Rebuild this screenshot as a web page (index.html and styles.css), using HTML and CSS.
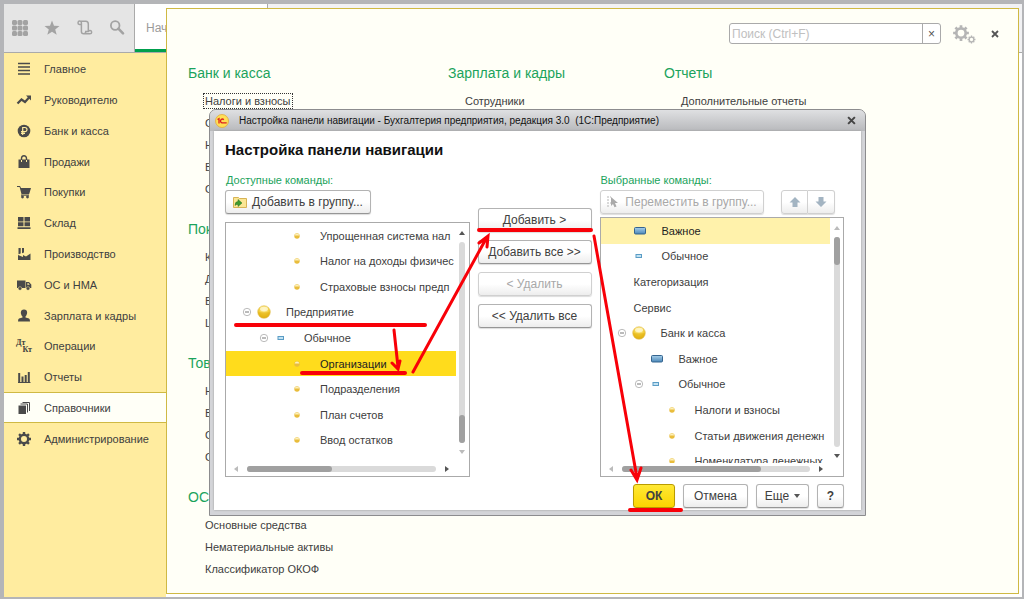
FILE: index.html
```html
<!DOCTYPE html>
<html lang="ru">
<head>
<meta charset="utf-8">
<title>Бухгалтерия предприятия</title>
<link rel="stylesheet" href="styles.css">
</head>
<body>
<svg class="defs" aria-hidden="true">
  <defs>
    <radialGradient id="gold" cx="50%" cy="30%" r="70%"><stop offset="0" stop-color="#fff3b0"/><stop offset=".55" stop-color="#f3cf3c"/><stop offset="1" stop-color="#d9a400"/></radialGradient>
    <linearGradient id="blue" x1="0" y1="0" x2="0" y2="1"><stop offset="0" stop-color="#a8d0ea"/><stop offset="1" stop-color="#4a86b8"/></linearGradient>
    <symbol id="dot" viewBox="0 0 8 8"><circle cx="4" cy="4" r="2.7" fill="#e9bd3c"/><path d="M1.6 3.4a2.5 2.5 0 0 1 4.8 0z" fill="#fdf0b8"/></symbol>
    <symbol id="ball" viewBox="0 0 14 14"><circle cx="7" cy="7" r="6.3" fill="url(#gold)" stroke="#e6c96a" stroke-width=".7"/><path d="M1 7.2h12a6 6 0 0 1-2 4.2q-4 1.6-8 0A6 6 0 0 1 1 7.2z" fill="#e5b414" opacity=".6"/><ellipse cx="7" cy="4" rx="4" ry="2.2" fill="#fff8cf" opacity=".8"/></symbol>
    <symbol id="bar" viewBox="0 0 12 8"><rect x=".5" y=".5" width="11" height="6.5" rx="1" fill="url(#blue)" stroke="#35648f"/></symbol>
    <symbol id="minibar" viewBox="0 0 8 6"><rect x="1" y="1.5" width="5.5" height="3" fill="#c3e2f2" stroke="#5a9cc5"/></symbol>
    <symbol id="minus" viewBox="0 0 10 10"><circle cx="5" cy="5" r="3.7" fill="#fff" stroke="#aaa" stroke-width=".8"/><path d="M3 5h4" stroke="#777"/></symbol>
    <symbol id="cog" viewBox="0 0 16 16"><circle cx="8" cy="8" r="4.2" fill="none" stroke="currentColor" stroke-width="2.4"/><path d="M8 1v2.4M8 12.600V15M1 8h2.400M12.600 8H15M3.050 3.050l1.700 1.700M11.250 11.250l1.700 1.700M3.050 12.950l1.700-1.700M11.250 4.750l1.700-1.700" stroke="currentColor" stroke-width="2.400"/></symbol>
  </defs>
</svg>

<div class="app">
  <header class="topbar">
    <div class="tools">
      <button type="button" aria-label="Меню"><svg width="16" height="16" viewBox="0 0 16 16"><g fill="currentColor"><rect x="0" y="0" width="5" height="5" rx="1.500"/><rect x="5.500" y="0" width="5" height="5" rx="1.500"/><rect x="11" y="0" width="5" height="5" rx="1.500"/><rect x="0" y="5.500" width="5" height="5" rx="1.500"/><rect x="5.500" y="5.500" width="5" height="5" rx="1.500"/><rect x="11" y="5.500" width="5" height="5" rx="1.500"/><rect x="0" y="11" width="5" height="5" rx="1.500"/><rect x="5.500" y="11" width="5" height="5" rx="1.500"/><rect x="11" y="11" width="5" height="5" rx="1.500"/></g></svg></button>
      <button type="button" aria-label="Избранное"><svg width="16" height="16" viewBox="0 0 16 16"><path fill="currentColor" d="M8 .6l2 5.100 5.500.3-4.300 3.400 1.500 5.400L8 11.700l-4.700 3.100 1.500-5.400L.5 6 6 5.700z"/></svg></button>
      <button type="button" aria-label="История"><svg width="16" height="16" viewBox="0 0 16 16"><path fill="none" stroke="currentColor" stroke-width="1.500" d="M4.500 4.500h-2a1.700 1.700 0 1 1 1.900-1.700v8.700q0 2.300 2.300 2.300H13a1.700 1.700 0 1 0-1.700-2V4q0-2.800-2.500-2.800H2.800M6.500 13.800q2.300 0 2.300-2.300h3"/></svg></button>
      <button type="button" aria-label="Поиск"><svg width="16" height="16" viewBox="0 0 16 16"><circle cx="6.200" cy="5.500" r="4.300" fill="none" stroke="currentColor" stroke-width="1.800"/><path d="M9.400 8.700l4.600 4.600" stroke="currentColor" stroke-width="2.600" stroke-linecap="round"/></svg></button>
    </div>
    <div class="tab">Начальная</div>
    <div class="tabs-rest"></div>
  </header>
  <nav class="sidebar">
    <ul>
      <li><a href="#"><svg viewBox="0 0 16 16"><path d="M2 2.500h12M2 6h12M2 9.500h12M2 13h12" stroke="currentColor" stroke-width="1.700"/></svg>Главное</a></li>
      <li><a href="#"><svg viewBox="0 0 16 16"><path d="M1.500 11.500l4-4 3.500 2.500 4.500-5" fill="none" stroke="currentColor" stroke-width="2.200"/><path d="M10 3.500h5v5z" fill="currentColor"/></svg>Руководителю</a></li>
      <li><a href="#"><svg viewBox="0 0 16 16"><circle cx="8" cy="8" r="6.300" fill="currentColor"/><path d="M6.700 12V4.500h2.200a2 2 0 0 1 0 4.200H5M5 10.400h4" fill="none" stroke="#ffec9f" stroke-width="1.200"/></svg>Банк и касса</a></li>
      <li><a href="#"><svg viewBox="0 0 16 16"><path d="M2.500 5.500h11V14h-11z" fill="currentColor"/><path d="M5.500 8V4.500a2.500 2.800 0 0 1 5 0V8" fill="none" stroke="currentColor" stroke-width="1.400"/><path d="M5.500 6v2M10.500 6v2" stroke="#ffec9f"/></svg>Продажи</a></li>
      <li><a href="#"><svg viewBox="0 0 16 16"><path d="M1 2h3l1 2h10l-1.800 6H5.500L3.600 3H1z" fill="currentColor"/><path d="M5 10.500h8v1.200H5z" fill="currentColor"/><circle cx="6.500" cy="13" r="1.400" fill="currentColor"/><circle cx="11.500" cy="13" r="1.400" fill="currentColor"/></svg>Покупки</a></li>
      <li><a href="#"><svg viewBox="0 0 16 16"><path d="M2 2h5.500v4.500H2zM8.500 2H14v4.500H8.500zM2 7.300h5.500v4H2zM8.500 7.300H14v4H8.500zM1.500 12.300h13V14h-13z" fill="currentColor"/></svg>Склад</a></li>
      <li><a href="#"><svg viewBox="0 0 16 16"><path d="M2 14V9l5 2V9l3 1.500 4.500-3V14zM2.500 2h2.200v5.500l-2.200.7zM6 2h2v4.500L6 7.200z" fill="currentColor"/></svg>Производство</a></li>
      <li><a href="#"><svg viewBox="0 0 16 16"><path d="M1 3.500h8.500V11H1zM10 5h3l2.300 2.500V11H10z" fill="currentColor"/><circle cx="4" cy="11.500" r="1.800" fill="currentColor" stroke="#ffec9f" stroke-width=".5"/><circle cx="12" cy="11.500" r="1.800" fill="currentColor" stroke="#ffec9f" stroke-width=".5"/><path d="M11.300 6.200h1.300l1.200 1.500h-2.500z" fill="#ffec9f"/></svg>ОС и НМА</a></li>
      <li><a href="#"><svg viewBox="0 0 16 16"><path d="M8 1.500c4.300 0 3.600 5 1.500 7v1l3.500 1q1 .5 1 3H2q0-2.500 1-3l3.500-1v-1C4.400 6.500 3.700 1.500 8 1.500z" fill="currentColor"/></svg>Зарплата и кадры</a></li>
      <li><a href="#"><span class="dtkt" aria-hidden="true"><b>Дт</b><b>Кт</b></span>Операции</a></li>
      <li><a href="#"><svg viewBox="0 0 16 16"><path d="M2.200 4h2v9h-2zM5.500 7.500h2V13h-2zM8.700 6h2v7h-2zM11.800 3h2v10h-2zM2 13h12.500v1H2z" fill="currentColor"/></svg>Отчеты</a></li>
      <li class="active"><a href="#"><svg viewBox="0 0 16 16"><path d="M2.500 5.500h7.500V14H2.500z" fill="currentColor"/><path d="M4.500 4h7v8.500M6.500 2.500h7V11" fill="none" stroke="currentColor"/></svg>Справочники</a></li>
      <li><a href="#"><svg viewBox="0 0 16 16"><use href="#cog"/></svg>Администрирование</a></li>
    </ul>
  </nav>

  <main class="panel">
    <div class="panel-head">
      <div class="search"><input type="text" aria-label="Поиск" placeholder="Поиск (Ctrl+F)"><button type="button" aria-label="Очистить">×</button></div>
      <button class="plain gears" type="button" aria-label="Настройки"><svg width="24" height="20" viewBox="0 0 24 20"><use href="#cog" width="18" height="18"/><use href="#cog" x="15" y="11" width="9" height="9"/></svg></button>
      <button class="plain close" type="button" aria-label="Закрыть"><svg width="8" height="8" viewBox="0 0 8 8"><path d="M1 1l6 6M7 1L1 7" stroke="currentColor" stroke-width="1.800"/></svg></button>
    </div>
    <div class="columns">
      <div class="column">
        <section><h2>Банк и касса</h2><ul><li><a class="focused" href="#">Налоги и взносы</a></li><li><a href="#">Статьи</a></li><li><a href="#">Номера</a></li><li><a href="#">Валюты</a></li><li><a href="#">Оплаты</a></li></ul></section>
        <section><h2>Покупки</h2><ul><li><a href="#">Контрагенты</a></li><li><a href="#">Договоры</a></li><li><a href="#">Валюты</a></li><li><a href="#">Цены</a></li></ul></section>
        <section><h2>Товары</h2><ul><li><a href="#">Номенклатура</a></li><li><a href="#">Виды</a></li><li><a href="#">Склады</a></li><li><a href="#">Серии</a></li></ul></section>
        <section><h2>ОС и НМА</h2><ul><li><a href="#">Основные средства</a></li><li><a href="#">Нематериальные активы</a></li><li><a href="#">Классификатор ОКОФ</a></li></ul></section>
      </div>
      <div class="column"><section><h2>Зарплата и кадры</h2><ul><li><a href="#">Сотрудники</a></li></ul></section></div>
      <div class="column"><section><h2>Отчеты</h2><ul><li><a href="#">Дополнительные отчеты</a></li></ul></section></div>
    </div>
  </main>
</div>

<div class="dialog" role="dialog" aria-labelledby="dialog-title">
  <div class="titlebar">
    <svg width="14" height="14" viewBox="0 0 14 14"><circle cx="7" cy="7" r="6.500" fill="#ffdf55" stroke="#e2a93a" stroke-width=".8"/><path d="M2.500 5.500L4 4.700V9.500M8.800 5.700a1.900 1.900 0 1 0-.9 3.100h3.800" fill="none" stroke="#dc1f1f" stroke-width="1.300"/></svg>
    <span>Настройка панели навигации - Бухгалтерия предприятия, редакция 3.0&nbsp; (1С:Предприятие)</span>
    <button class="plain" type="button" aria-label="Закрыть"><svg width="9" height="9" viewBox="0 0 8 8"><path d="M1 1l6 6M7 1L1 7" stroke="currentColor" stroke-width="1.800"/></svg></button>
  </div>
  <div class="dialog-body">
    <h1 id="dialog-title">Настройка панели навигации</h1>
    <div class="picker">
      <div class="side">
        <p>Доступные команды:</p>
        <div class="actions"><button class="btn add-group" type="button"><svg width="14" height="12" viewBox="0 0 14 12"><path d="M.5 1.500h5l1 1h7v9H.5z" fill="#fbe694" stroke="#d7b355"/><path d="M2 9.500q0-4 3-4v-2l4 3.500-4 3.500v-2Q3 8 2 9.500z" fill="#3f9b2f" stroke="#287020" stroke-width=".5"/></svg>Добавить в группу...</button></div>
        <div class="list">
          <ul class="rows">
            <li class="l3"><svg class="dot"><use href="#dot"/></svg><span>Упрощенная система нал</span></li>
            <li class="l3"><svg class="dot"><use href="#dot"/></svg><span>Налог на доходы физичес</span></li>
            <li class="l3"><svg class="dot"><use href="#dot"/></svg><span>Страховые взносы предп</span></li>
            <li class="l1"><svg class="minus"><use href="#minus"/></svg><svg class="ball"><use href="#ball"/></svg><span>Предприятие</span></li>
            <li class="l2"><svg class="minus"><use href="#minus"/></svg><svg class="mini"><use href="#minibar"/></svg><span>Обычное</span></li>
            <li class="l3 current"><svg class="dot"><use href="#dot"/></svg><span>Организации</span></li>
            <li class="l3"><svg class="dot"><use href="#dot"/></svg><span>Подразделения</span></li>
            <li class="l3"><svg class="dot"><use href="#dot"/></svg><span>План счетов</span></li>
            <li class="l3"><svg class="dot"><use href="#dot"/></svg><span>Ввод остатков</span></li>
          </ul>
          <div class="vbar"><i class="up"></i><div class="track"><div class="thumb low"></div></div><i class="down off"></i></div>
          <div class="hbar"><i class="left off"></i><div class="track"><div class="thumb"></div></div><i class="right"></i></div>
        </div>
      </div>
      <div class="moves">
        <button class="btn" type="button">Добавить &gt;</button>
        <button class="btn" type="button">Добавить все &gt;&gt;</button>
        <button class="btn" type="button" disabled>&lt; Удалить</button>
        <button class="btn" type="button">&lt;&lt; Удалить все</button>
      </div>
      <div class="side chosen">
        <p>Выбранные команды:</p>
        <div class="actions">
          <button class="btn move-group" type="button" disabled><svg width="14" height="12" viewBox="0 0 14 12"><path d="M1 1h4M1 4h3M1 7h4M1 10h3" stroke="#b5b5b5" stroke-dasharray="2 1"/><path d="M5 1l7 6H9l1.500 3.500-2 .8L7 8l-2 2z" fill="#aaa"/></svg>Переместить в группу...</button>
          <div class="pair"><button class="btn" type="button" disabled aria-label="Вверх"><svg width="12" height="12" viewBox="0 0 12 12"><path d="M6 1l5.500 5.500H8.500V11h-5V6.500h-3z" fill="#a3b4c2"/></svg></button><button class="btn" type="button" disabled aria-label="Вниз"><svg width="12" height="12" viewBox="0 0 12 12"><path d="M6 11L.5 5.500h3V1h5v4.500h3z" fill="#a3b4c2"/></svg></button></div>
        </div>
        <div class="list">
          <ul class="rows">
            <li class="r1 picked"><svg class="bar"><use href="#bar"/></svg><span>Важное</span></li>
            <li class="r1"><svg class="mini"><use href="#minibar"/></svg><span>Обычное</span></li>
            <li class="r0"><span>Категоризация</span></li>
            <li class="r0"><span>Сервис</span></li>
            <li class="r1"><svg class="minus"><use href="#minus"/></svg><svg class="ball"><use href="#ball"/></svg><span>Банк и касса</span></li>
            <li class="r2"><svg class="bar"><use href="#bar"/></svg><span>Важное</span></li>
            <li class="r2"><svg class="minus"><use href="#minus"/></svg><svg class="mini"><use href="#minibar"/></svg><span>Обычное</span></li>
            <li class="r3"><svg class="dot"><use href="#dot"/></svg><span>Налоги и взносы</span></li>
            <li class="r3"><svg class="dot"><use href="#dot"/></svg><span>Статьи движения денежн</span></li>
            <li class="r3"><svg class="dot"><use href="#dot"/></svg><span>Номенклатура денежных</span></li>
          </ul>
          <div class="vbar"><i class="up off"></i><div class="track"><div class="thumb"></div></div><i class="down"></i></div>
          <div class="hbar"><i class="left off"></i><div class="track"><div class="thumb wide"></div></div><i class="right"></i></div>
        </div>
      </div>
    </div>
    <div class="footer">
      <button class="btn ok" type="button">ОК</button>
      <button class="btn cancel" type="button">Отмена</button>
      <button class="btn more" type="button">Еще<i class="down"></i></button>
      <button class="btn help" type="button">?</button>
    </div>
  </div>
</div>

<svg class="marks" width="1024" height="599" viewBox="0 0 1024 599" aria-hidden="true">
  <g fill="none" stroke="#f80008" stroke-linecap="round">
    <path stroke-width="4" d="M236 325H425M302 373H405M479 230H591M630 510H681"/>
    <path stroke-width="3" d="M394 330L398 367M392 363l6 6 2-8M413 372L487 237M479 243l9-7-1 11M594 236L637 478M631 470l6 10 4-12"/>
  </g>
</svg>
</body>
</html>
```

FILE: styles.css
```css
* { box-sizing: border-box; }
body {
  margin: 0;
  font: 12px/16px "Liberation Sans", Arial, sans-serif;
  color: #404040;
}
ul { list-style: none; margin: 0; padding: 0; }
h1, h2, p { margin: 0; }
a { color: inherit; text-decoration: none; }
button, input { font: inherit; color: inherit; }
button { padding: 0; }
.defs { position: absolute; width: 0; height: 0; }
.plain { display: flex; border: 0; background: none; }

/* Main window */
.app {
  position: relative;
  display: flex;
  flex-direction: column;
  min-height: 100vh;
  padding: 4px 2px 2px 4px;
  background: #b4b5b8;
}
.topbar { display: flex; height: 49px; border-bottom: 1px solid #aaa; background: #e5e5e5; }
.tools {
  display: flex;
  align-items: center;
  justify-content: space-between;
  width: 131px;
  padding: 0 9px 0 8px;
  border-right: 1px solid #aaa;
}
.tools button { display: flex; border: 0; background: none; color: #a3a3a3; }
.tab {
  width: 133px;
  padding: 16px 11px 0;
  border-right: 1px solid #aaa;
  border-bottom: 3px solid #009f4d;
  background: #fff;
  color: #9b9b9b;
}
.tabs-rest { flex: 1; background: #f2f2f4; }
.sidebar {
  flex: 1;
  padding-top: 1px;
  background: linear-gradient(to right, #ffec9f 162px, #fff 162px);
}
.sidebar ul { display: grid; grid-auto-rows: 1fr; width: 162px; height: 400px; }
.sidebar a {
  display: flex;
  align-items: center;
  gap: 12px;
  height: 100%;
  padding-left: 12px;
  font-size: 11px;
}
.sidebar svg { width: 16px; height: 16px; color: #4a4a4a; }
.sidebar .active { border: 1px solid #cfb944; border-width: 1px 0; background: #fffff7; }
.dtkt {
  display: flex;
  flex-direction: column;
  width: 16px;
  font: 8px/7px "Liberation Serif", serif;
}
.dtkt b + b { align-self: flex-end; }

/* Section panel */
.panel {
  position: absolute;
  inset: 8px 5px 5px 166px;
  border: 1px solid #cfb944;
  background: #fffff7;
}
.panel-head {
  display: flex;
  align-items: center;
  justify-content: flex-end;
  padding: 14px 19px 0 0;
}
.search {
  display: flex;
  width: 212px;
  height: 21px;
  border: 1px solid #aaa;
  border-radius: 3px;
  background: #fff;
}
.search input { flex: 1; min-width: 0; padding: 0 2px; border: 0; background: none; outline: 0; }
.search input::placeholder { color: #c0c0c0; opacity: 1; }
.search button { width: 18px; border: 0; border-left: 1px solid #aaa; background: none; color: #555; line-height: 16px; }
.gears { margin-left: 11px; color: #b5b5b5; }
.close { margin-left: 15px; color: #555; }
.columns { display: flex; padding: 17px 21px 0; }
.column:nth-child(1) { width: 260px; }
.column:nth-child(2) { width: 216px; }
.column section { margin-bottom: 17px; }
.column h2 { margin-bottom: 5px; font-size: 14px; font-weight: 400; line-height: 24px; color: #1ba35c; }
.column ul { padding-left: 15px; font-size: 11px; }
.column li { display: flex; align-items: center; height: 22px; }
.column li a { padding: 0 1px; border: 1px solid transparent; line-height: 14px; }
.column li a.focused { border: 1px dotted #333; }

/* Dialog */
.dialog {
  position: absolute;
  left: 209px;
  top: 109px;
  width: 657px;
  padding: 0 4px 5px;
  border: 1px solid #8c8c8e;
  border-radius: 7px 7px 0 0;
  background: #d3d4d8;
}
.titlebar {
  display: flex;
  align-items: center;
  height: 21px;
  margin: 0 -4px;
  padding: 0 9px 0 5px;
  border-radius: 6px 6px 0 0;
  background: linear-gradient(#dfe0e2, #b8b9bc);
  font-size: 10px;
  color: #111;
}
.titlebar span { flex: 1; margin-left: 10px; white-space: nowrap; }
.titlebar button { color: #444; }
.dialog-body { padding: 8px 17px 2px 11px; background: #fff; box-shadow: 0 0 2px #999; }
h1 { font-size: 15px; font-weight: 700; line-height: 22px; color: #111; }
.picker { display: grid; grid-template-columns: 1fr 114px 1fr; gap: 8px; margin-top: 11px; }
.side { min-width: 0; }
.side p { padding-left: 1px; font-size: 11px; color: #1ba35c; }
.actions { display: flex; justify-content: space-between; height: 24px; margin-top: 2px; }
.btn {
  display: flex;
  align-items: center;
  justify-content: center;
  height: 24px;
  border: 1px solid #b3b3b3;
  border-bottom-color: #969696;
  border-radius: 3px;
  background: linear-gradient(#fff 50%, #ededed);
  box-shadow: 0 1px 1px #ddd;
}
.btn:disabled { border-color: #d0d0d0; color: #a8a8a8; }
.add-group { width: 146px; gap: 5px; }
.move-group { width: 164px; gap: 5px; }
.pair { display: flex; margin-right: 9px; }
.pair .btn { width: 27px; border-radius: 3px 0 0 3px; }
.pair .btn + .btn { border-left: 0; border-radius: 0 3px 3px 0; }
.list {
  display: grid;
  grid-template: 1fr 14px / 1fr 13px;
  height: 255px;
  margin-top: 8px;
  border: 1px solid #aaa;
  background: #fff;
  font-size: 11px;
}
.rows { display: grid; grid-auto-rows: 1fr; height: 230px; overflow: hidden; }
.chosen .list { height: 260px; margin-top: 3px; }
.chosen .rows { height: 256px; }
.chosen .list { overflow: hidden; grid-template-rows: 244px 14px; }
.chosen .rows { clip-path: inset(0 0 11px 0); }
.rows li { display: flex; align-items: center; min-width: 0; overflow: hidden; white-space: nowrap; }
.rows svg { flex: none; }
.dot { width: 8px; height: 8px; margin-right: 19px; }
.ball { width: 14px; height: 14px; margin: 0 15px 0 5px; }
.mini { width: 8px; height: 6px; margin: 0 19px 0 8px; }
.bar { width: 12px; height: 8px; margin-right: 16px; }
.minus { width: 10px; height: 10px; }
.l1 { padding-left: 16px; }
.l2 { padding-left: 33px; }
.l3 { padding-left: 67px; }
.r0 { padding-left: 33px; }
.r1 { padding-left: 33px; }
.r1:has(.minus) { padding-left: 16px; }
.r1 > .mini:first-child { margin: 0 19px 0 1px; }
.r2 { padding-left: 50px; }
.r2:has(.minus) { padding-left: 33px; }
.r3 { padding-left: 67px; }
.current { background: #ffdc1c; color: #222; }
.picked { background: #fff2ab; color: #222; }
.vbar { display: flex; flex-direction: column; align-items: center; justify-content: space-between; padding: 8px 0; }
.chosen .vbar { padding-bottom: 4px; }
.hbar { display: flex; grid-column: 1 / -1; align-items: center; gap: 9px; padding: 0 20px 0 8px; }
.chosen .hbar { grid-row: 2; }
.track { flex: 1; border-radius: 3px; background: #dadada; }
.vbar .track { display: flex; flex-direction: column; width: 6px; margin: 7px 0; }
.hbar .track { height: 6px; }
.thumb { border-radius: 3px; background: #a0a0a0; }
.vbar .thumb { height: 28px; }
.vbar .low { margin-top: auto; }
.hbar .thumb { width: 45%; height: 6px; }
.hbar .wide { width: 74%; }
i.up, i.down { border: 3px solid transparent; }
i.up { border-top: 0; border-bottom: 4px solid #555; }
i.down { border-bottom: 0; border-top: 4px solid #555; }
i.left, i.right { border: 3px solid transparent; }
i.left { border-left: 0; border-right: 4px solid #555; }
i.right { border-right: 0; border-left: 4px solid #555; }
i.up.off { border-bottom-color: #bbb; }
i.down.off { border-top-color: #bbb; }
i.left.off { border-right-color: #bbb; }
.moves { display: flex; flex-direction: column; gap: 8px; padding-top: 36px; }
.footer { display: flex; justify-content: flex-end; gap: 8px; margin-top: 7px; }
.ok { width: 42px; border-color: #b99b00; background: linear-gradient(#ffe835, #fcd500); font-weight: 700; }
.cancel { width: 65px; }
.more { width: 53px; gap: 5px; }
.help { width: 27px; font-weight: 700; }

/* Instruction strokes over the windows */
.marks { position: absolute; left: 0; top: 0; pointer-events: none; }
```
